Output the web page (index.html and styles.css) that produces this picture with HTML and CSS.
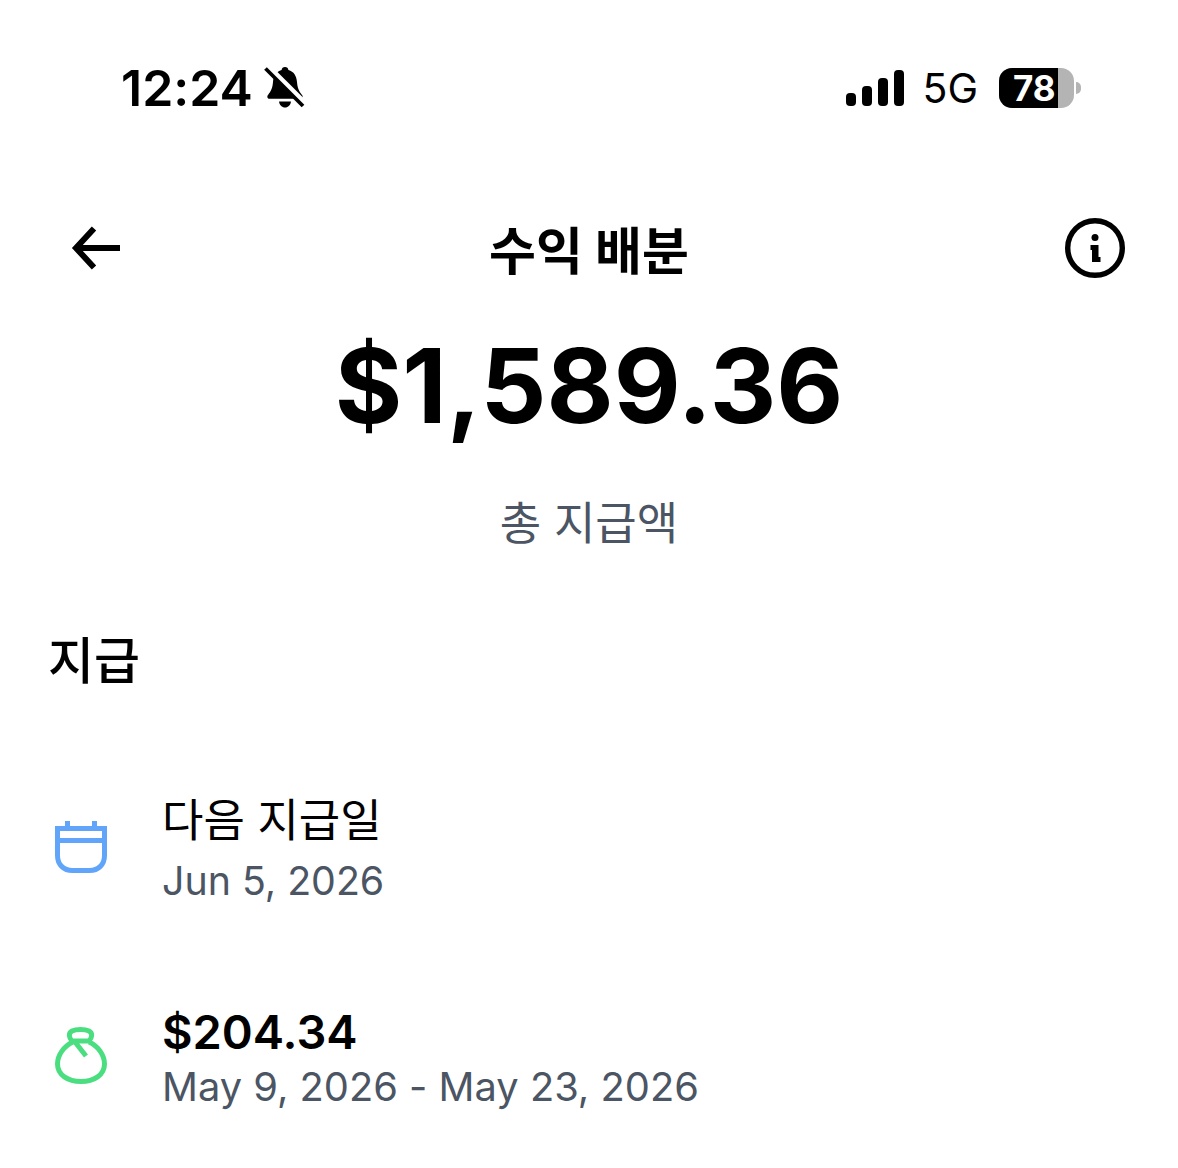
FILE: index.html
```html
<!DOCTYPE html>
<html lang="ko">
<head>
    <meta charset="utf-8">
    <title>수익 배분</title>
    <link rel="stylesheet" href="styles.css">
</head>
<body>
    <div class="status-bar">
        <div class="status-left">
            <span class="time">12:24</span>
            <svg class="bell" width="42" height="44" viewBox="0 0 42 44">
                <path d="M21 1c2 0 3.200 1.300 3.400 3 5.500 1.500 8.100 6 8.600 12 .4 6 2 9 5 13 1.300 1.500.6 3.800-1.600 3.800H5.600C3.400 32.800 2.700 30.500 4 29c3-4 4.600-7 5-13 .5-6 3.100-10.500 8.600-12 .2-1.700 1.400-3 3.400-3z" fill="#000"/>
                <path d="M15 35.500h12c-.4 3.500-2.900 6-6 6s-5.600-2.500-6-6z" fill="#000"/>
                <path d="M3 .5l38 38" stroke="#fff" stroke-width="7"/>
                <path d="M1.500 2.500l37.500 37.500" stroke="#000" stroke-width="3.800"/>
            </svg>
        </div>
        <div class="status-right">
            <div class="signal">
                <span class="bar bar-1"></span>
                <span class="bar bar-2"></span>
                <span class="bar bar-3"></span>
                <span class="bar bar-4"></span>
            </div>
            <span class="network">5G</span>
            <div class="battery">
                <div class="battery-body">
                    <div class="battery-fill"></div>
                    <span class="battery-text">78</span>
                </div>
                <span class="battery-tip"></span>
            </div>
        </div>
    </div>

    <div class="header">
        <svg class="back" width="54" height="48" viewBox="0 0 54 48">
            <path d="M8 24H50M24 4.500L6 24l18 19.500" fill="none" stroke="#000" stroke-width="6"/>
        </svg>
        <h1>수익 배분</h1>
        <svg class="info" width="60" height="60" viewBox="0 0 60 60">
            <circle cx="30" cy="30" r="27.300" fill="none" stroke="#000" stroke-width="5.400"/>
            <circle cx="30" cy="19.500" r="3.500" fill="#000"/>
            <path d="M25.500 27H33.500V39H35.500V44H27V32H25.500z" fill="#000"/>
        </svg>
    </div>

    <div class="total">
        <div class="amount">$1,589.36</div>
        <div class="amount-label">총 지급액</div>
    </div>

    <h2>지급</h2>

    <div class="row row-first">
        <svg class="row-icon" width="52" height="52" viewBox="0 0 52 52">
            <path d="M2.500 7.500h47v27c0 9-6 15-15 15h-17c-9 0-15-6-15-15zM2.500 19.500h47M12.500 0v7.500M39.500 0v7.500" fill="none" stroke="#60a5fa" stroke-width="5"/>
        </svg>
        <div class="row-text">
            <div class="row-title">다음 지급일</div>
            <div class="row-sub">Jun 5, 2026</div>
        </div>
    </div>

    <div class="row row-second">
        <svg class="row-icon" width="52" height="57" viewBox="0 0 52 57">
            <path d="M18 15C9 19 2.500 28 2.500 37 2.500 48 13 54.500 26 54.500S49.500 48 49.500 37C49.500 28 43 19 34 15" fill="none" stroke="#4ade80" stroke-width="5"/>
            <path d="M17 14C14 11 13 6 17 4 21 2 30 2 34 4 38 6 37 11 34 14zM20 15l11 14" fill="none" stroke="#4ade80" stroke-width="5"/>
        </svg>
        <div class="row-text">
            <div class="row-title amount-small">$204.34</div>
            <div class="row-sub">May 9, 2026 - May 23, 2026</div>
        </div>
    </div>
</body>
</html>
```

FILE: styles.css
```css
body {
    font-family: Inter, "Noto Sans CJK KR", sans-serif;
    font-feature-settings: "calt" 0;
    margin: 0;
    background-color: #fff;
    color: #000;
    height: 1168px;
    overflow: hidden;
}
.status-bar {
    display: flex;
    justify-content: space-between;
    align-items: center;
    height: 48px;
    padding: 64px 97px 0 121px;
}
.status-left {
    display: flex;
    align-items: center;
    gap: 11px;
}
.time {
    font-size: 50px;
    font-weight: 600;
}
.status-right {
    display: flex;
    align-items: center;
}
.signal {
    display: flex;
    align-items: flex-end;
    gap: 6px;
    height: 36px;
}
.bar {
    width: 10px;
    border-radius: 4px;
    background-color: #000;
}
.bar-1 { height: 13px; }
.bar-2 { height: 20px; }
.bar-3 { height: 28px; }
.bar-4 { height: 36px; }
.network {
    font-size: 41px;
    font-weight: 400;
    margin-left: 18px;
}
.battery {
    display: flex;
    align-items: center;
    margin-left: 21px;
}
.battery-body {
    position: relative;
    width: 75px;
    height: 40px;
    border-radius: 13px;
    overflow: hidden;
    background-color: #b4b4b4;
}
.battery-fill {
    width: 59px;
    height: 100%;
    background-color: #000;
}
.battery-text {
    position: absolute;
    top: 0;
    left: 14px;
    font-size: 35px;
    font-weight: 700;
    line-height: 40px;
    color: #fff;
}
.battery-tip {
    width: 5px;
    height: 12px;
    margin-left: 2px;
    border-radius: 0 6px 6px 0;
    background-color: #b4b4b4;
}
.header {
    display: grid;
    grid-template-columns: 1fr auto 1fr;
    align-items: center;
    height: 60px;
    padding: 0 53px;
    margin-top: 99px;
}
.back {
    margin-left: 17px;
}
.header h1 {
    margin: 0;
    font-size: 51px;
    font-weight: 700;
}
.info {
    justify-self: end;
}
.total {
    text-align: center;
}
.amount {
    font-size: 103.200px;
    font-weight: 700;
    line-height: 120px;
    margin-top: 55px;
}
.amount-label {
    font-size: 45px;
    line-height: 60px;
    color: #4b5563;
    margin-top: 48px;
}
h2 {
    font-size: 50px;
    font-weight: 500;
    line-height: 70px;
    margin: 72px 0 0 48px;
}
.row {
    display: flex;
    align-items: center;
    padding-left: 55px;
}
.row-first {
    margin-top: 95px;
}
.row-second {
    margin-top: 96px;
}
.row-first .row-title {
    margin-bottom: 5px;
}
.row-icon {
    margin-bottom: 4px;
}
.row-text {
    margin-left: 55px;
}
.row-title {
    font-size: 45px;
    font-weight: 400;
    line-height: 60px;
}
.amount-small {
    font-size: 47px;
    font-weight: 600;
}
.row-sub {
    font-size: 39.300px;
    line-height: 50px;
    color: #4b5563;
}
.row-second .row-sub {
    font-size: 39.800px;
}
```
